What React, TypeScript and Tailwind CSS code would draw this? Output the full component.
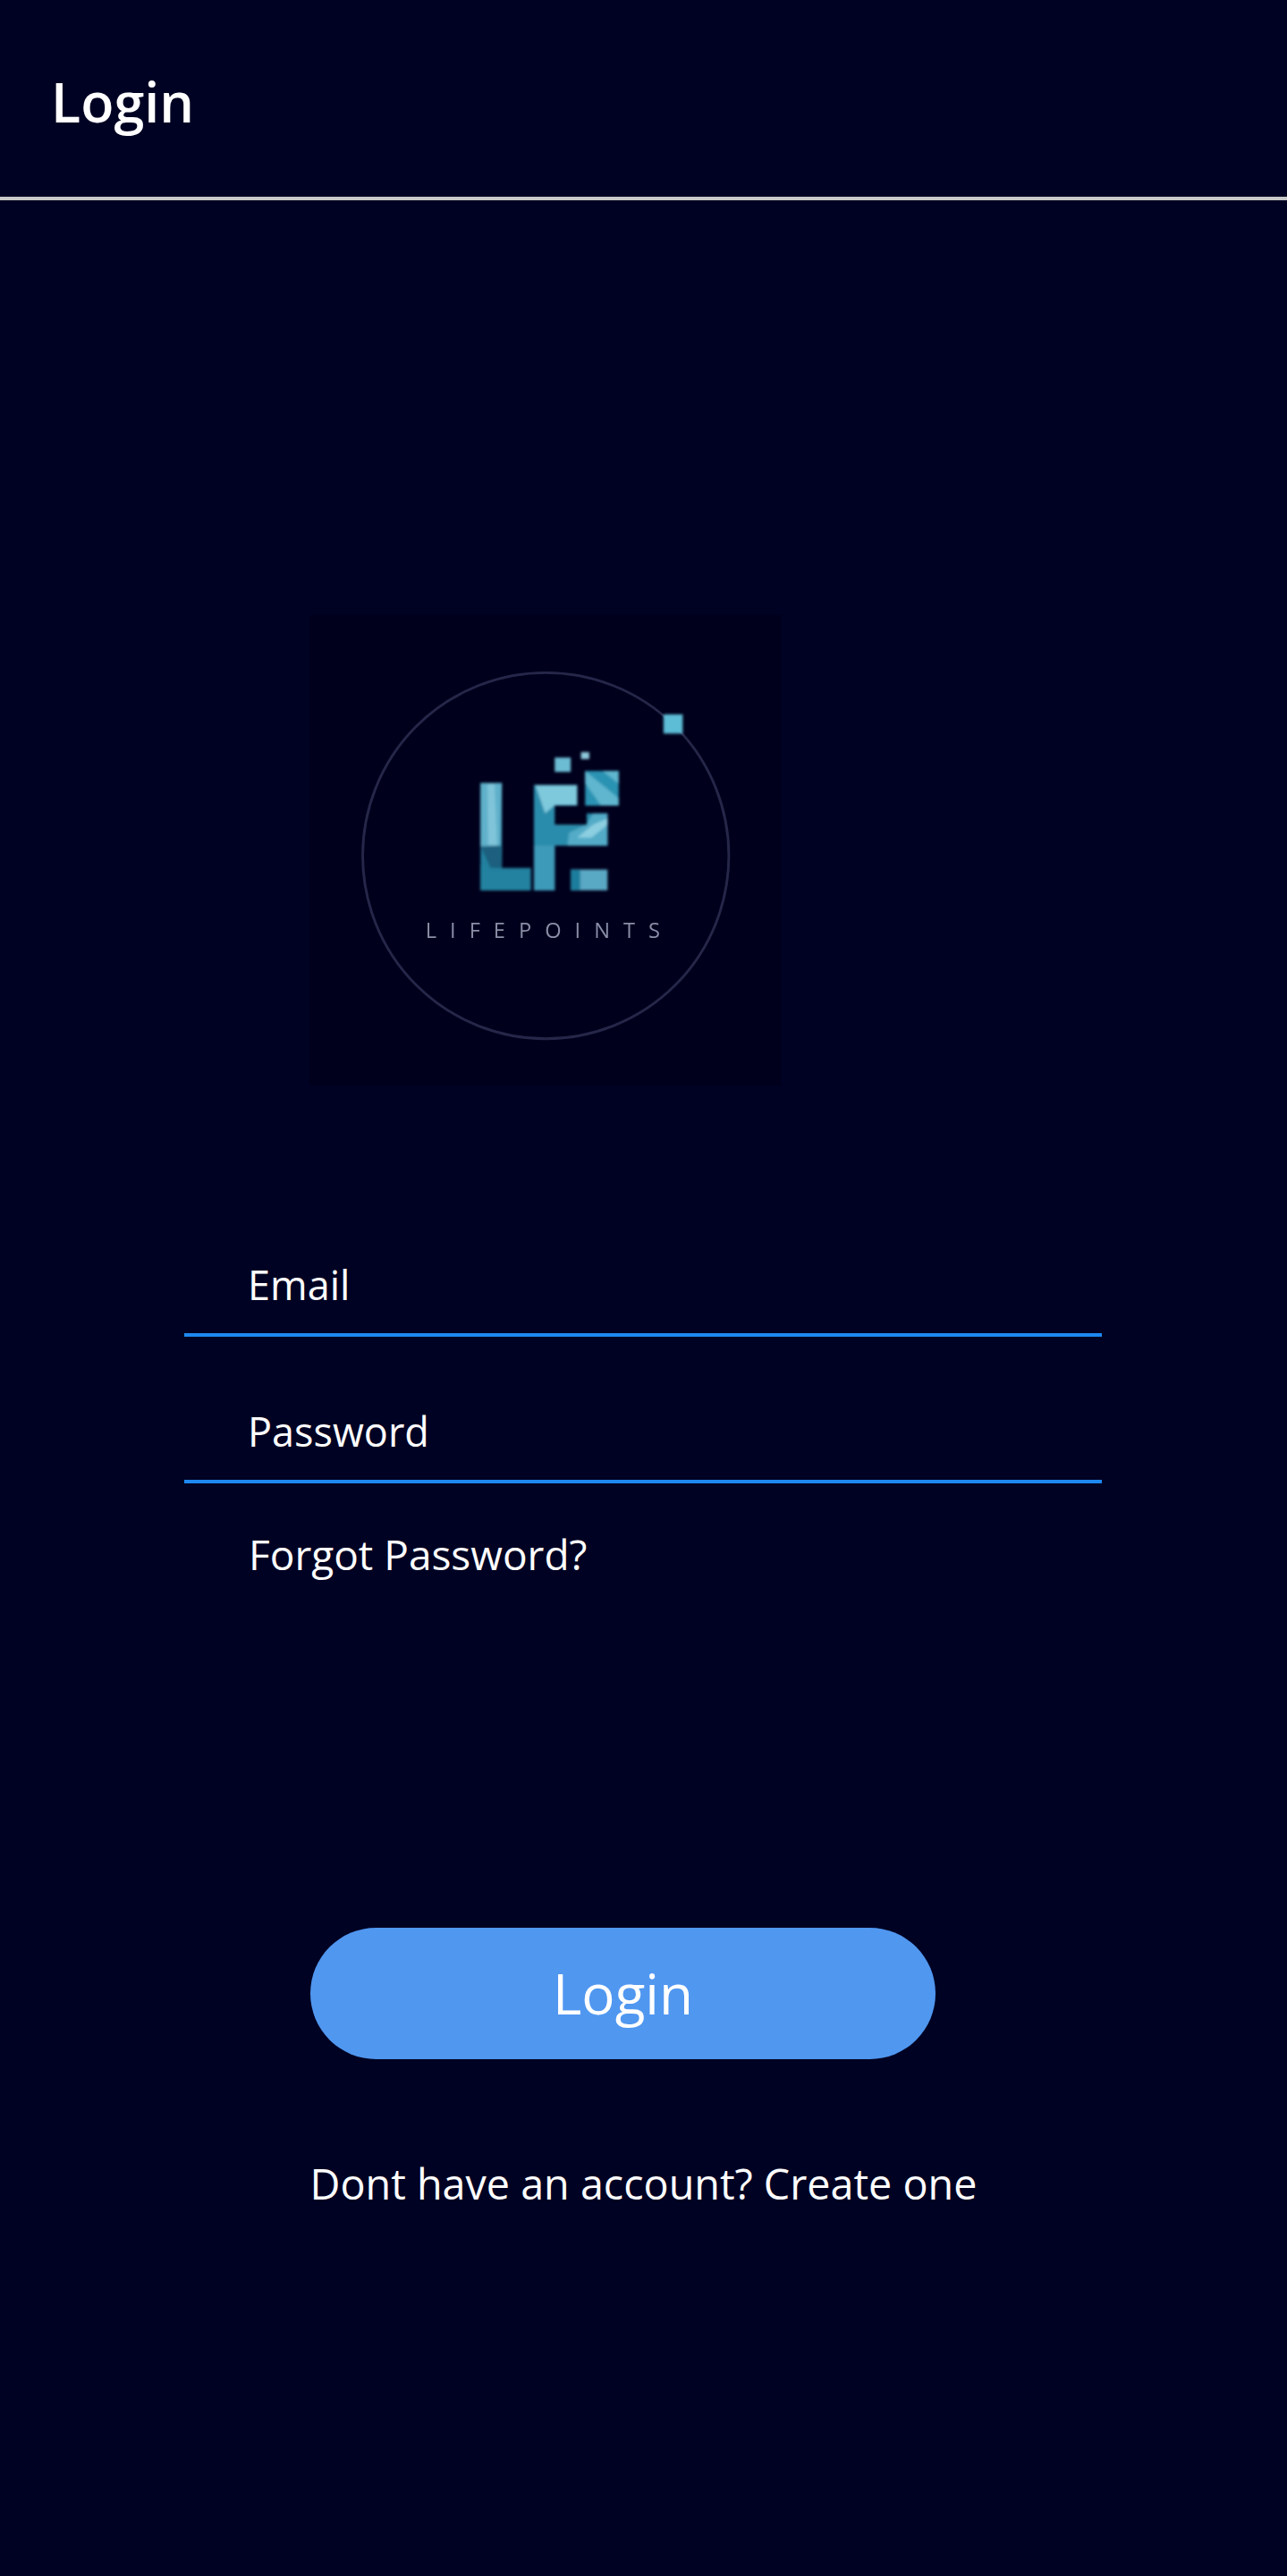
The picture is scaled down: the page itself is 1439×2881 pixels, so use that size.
const font = 'font-["Open_Sans",sans-serif]'

const LifepointsLogo = () => (
  <svg viewBox="45 50 1470 1470" className="h-full w-full" fill="none">
    <defs>
      <filter id="lpSoft">
        <feGaussianBlur stdDeviation="4" />
      </filter>
      <filter id="lpText">
        <feGaussianBlur stdDeviation="2" />
      </filter>
    </defs>
    <circle cx="782" cy="802" r="572" stroke="#25284a" strokeWidth="8" filter="url(#lpText)" />
    <g filter="url(#lpSoft)">
      {/* L */}
      <path d="M578 575h67v265h90v70H578z" fill="#22809f" />
      <path d="M578 575h67l-4 195-63 3z" fill="#5fb0ca" />
      <path d="M600 578h22l8 190h-28z" fill="#80c4d9" />
      <path d="M578 773l63-3 3 70h-34z" fill="#1a5f7e" />
      <path d="M578 830l40 25 117-15v70H578z" fill="#24829f" />
      {/* P */}
      <path d="M745 580h135v65h-70v60h100v-35h65v100H810v140h-65z" fill="#2b8cac" />
      <path d="M750 582h130v62h-70l-30 25z" fill="#7fc9dd" />
      <path d="M745 770h65v140h-65z" fill="#3c9ab8" />
      <path d="M850 770l5-40 55-25 20-35h45v100z" fill="#52abc7" />
      <path d="M880 745l50-40 45-20v20l-50 40z" fill="#8ccfe1" />
      {/* right block and dots */}
      <path d="M905 537h105v108H905z" fill="#2a93b3" />
      <path d="M905 537l105 85v23h-55l-50-70zM960 537h50v40z" fill="#5fb6ce" />
      <path d="M860 845h115v65H860z" fill="#5aa9c4" />
      <path d="M860 845h30v65h-30z" fill="#1f7d9c" />
      <path d="M810 495h50v45h-50z" fill="#6cbcd4" />
      <path d="M892 478h26v22h-26z" fill="#8cc8da" />
      <path d="M1150 360h60v60h-60z" fill="#5dbcd6" />
    </g>
    <text
      x="406"
      y="1058"
      fill="#8a8ea6"
      fontFamily="Open Sans, sans-serif"
      fontWeight="400"
      fontSize="66"
      letterSpacing="42"
      filter="url(#lpText)"
    >
      LIFEPOINTS
    </text>
  </svg>
)

const Field = ({ label }: { label: string }) => (
  <input
    placeholder={label}
    className={`h-[90px] w-full border-b-4 border-[#1e88f0] bg-transparent pl-[71px] pb-[23px] text-[45px] font-normal text-white outline-none placeholder:text-white ${font}`}
  />
)

export default function App() {
  return (
    <div className={`min-h-[2881px] bg-[#000223] text-white ${font}`}>
      {/* PAGE HEADER */}
      <header className="flex h-[224px] items-center border-b-4 border-[#c8c8c8] pt-[6px] pl-[57px]">
        <h1 className="text-[61px] leading-none font-semibold">Login</h1>
      </header>

      {/* LOGO */}
      <div className="mt-[464px] ml-[346px] h-[526px] w-[527px] bg-[#00001c]">
        <LifepointsLogo />
      </div>

      {/* FORM */}
      <form className="mt-[191px] flex flex-col">
        <div className="ml-[206px] flex w-[1026px] flex-col gap-[74px]">
          <Field label="Email" />
          <Field label="Password" />
        </div>
        <a className="mt-[46px] ml-[278px] text-[46px] leading-[66px] font-normal">Forgot Password?</a>
        <button
          type="button"
          className="mt-[385px] ml-[347px] h-[147px] w-[699px] rounded-full bg-[#5097f0] text-[62px] font-normal text-white"
        >
          Login
        </button>
        <p className="mt-[106px] text-center text-[46.7px] leading-[66px] font-normal">Dont have an account? Create one</p>
      </form>
    </div>
  )
}
